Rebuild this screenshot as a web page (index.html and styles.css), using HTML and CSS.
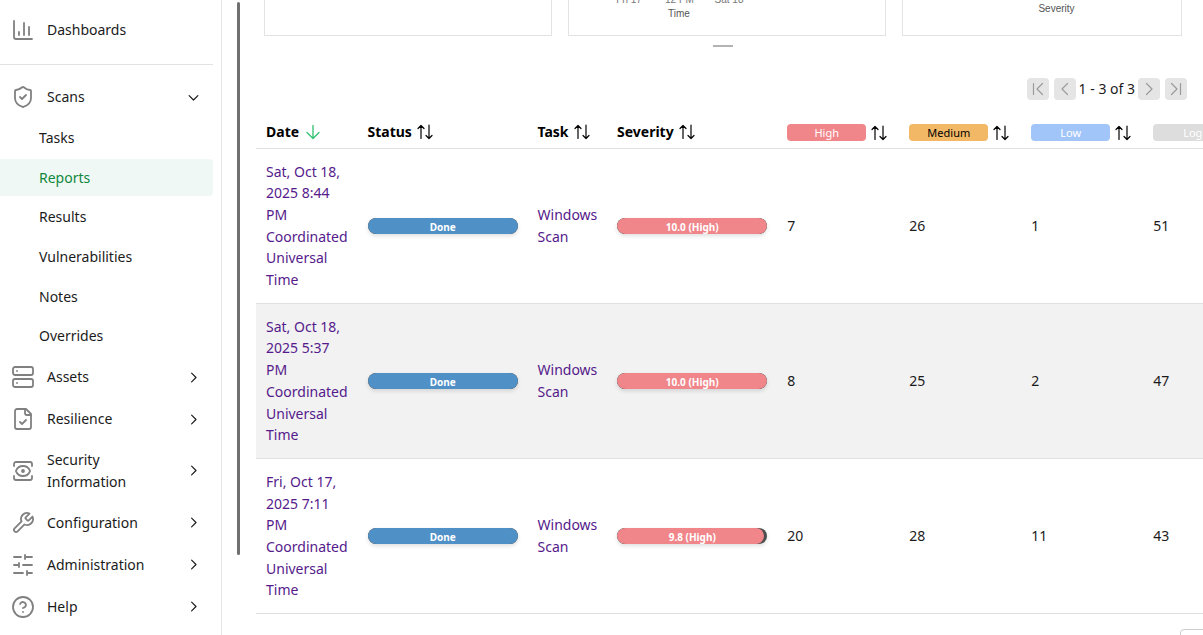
FILE: index.html
```html
<!DOCTYPE html>
<html lang="en">
<head>
<meta charset="utf-8">
<title>Reports</title>
<link rel="stylesheet" href="styles.css">
</head>
<body>
<svg class="defs" width="0" height="0">
  <symbol id="right" viewBox="0 0 24 24"><path d="m9 19 7-7-7-7"/></symbol>
  <symbol id="down" viewBox="0 0 24 24"><path d="m5 9 7 7 7-7"/></symbol>
  <symbol id="sort" viewBox="0 0 18 18"><path d="M5 15.500V2.500M2 5.500l3-3 3 3M13 2v13.500M10 12.500l3 3 3-3"/></symbol>
</svg>
<div class="app">
  <nav class="sidebar">
    <a class="item"><svg class="icon" viewBox="0 0 24 24"><path d="M3 3v16a2 2 0 0 0 2 2h16M18 17V9M13 17V5M8 17v-3"/></svg><span>Dashboards</span></a>
    <div class="divider"></div>
    <a class="item"><svg class="icon" viewBox="0 0 24 24"><path d="M20 13c0 5-3.500 7.500-7.660 8.950a1 1 0 0 1-.67-.01C7.500 20.500 4 18 4 13V6a1 1 0 0 1 1-1c2 0 4.500-1.200 6.240-2.720a1.170 1.170 0 0 1 1.520 0C14.510 3.810 17 5 19 5a1 1 0 0 1 1 1z"/><path d="m9 12 2 2 4-4"/></svg><span>Scans</span><svg class="chev"><use href="#down"/></svg></a>
    <div class="sub">
      <a>Tasks</a><a class="active">Reports</a><a>Results</a><a>Vulnerabilities</a><a>Notes</a><a>Overrides</a>
    </div>
    <a class="item"><svg class="icon" viewBox="0 0 24 24"><rect width="20" height="8" x="2" y="2" rx="2"/><rect width="20" height="8" x="2" y="14" rx="2"/><path d="M6 6h.01M6 18h.01"/></svg><span>Assets</span><svg class="chev"><use href="#right"/></svg></a>
    <a class="item"><svg class="icon" viewBox="0 0 24 24"><path d="M15 2H6a2 2 0 0 0-2 2v16a2 2 0 0 0 2 2h12a2 2 0 0 0 2-2V7Z"/><path d="M14 2v4a2 2 0 0 0 2 2h4M9 15l2 2 4-4"/></svg><span>Resilience</span><svg class="chev"><use href="#right"/></svg></a>
    <a class="item"><svg class="icon" viewBox="0 0 24 24"><path d="M3 7V5a2 2 0 0 1 2-2h14a2 2 0 0 1 2 2v2M3 17v2a2 2 0 0 0 2 2h14a2 2 0 0 0 2-2v-2"/><circle cx="12" cy="12" r="1"/><path d="M18.944 12.330a1 1 0 0 0 0-.660 7.500 7.500 0 0 0-13.888 0 1 1 0 0 0 0 .660 7.500 7.500 0 0 0 13.888 0"/></svg><span>Security<br>Information</span><svg class="chev"><use href="#right"/></svg></a>
    <a class="item"><svg class="icon" viewBox="0 0 24 24"><path d="M14.700 6.300a1 1 0 0 0 0 1.400l1.600 1.600a1 1 0 0 0 1.400 0l3.770-3.770a6 6 0 0 1-7.940 7.940l-6.910 6.910a2.120 2.120 0 0 1-3-3l6.910-6.910a6 6 0 0 1 7.940-7.940l-3.760 3.760z"/></svg><span>Configuration</span><svg class="chev"><use href="#right"/></svg></a>
    <a class="item"><svg class="icon" viewBox="0 0 24 24"><path d="M21 4h-7M10 4H3M21 12h-9M8 12H3M21 20h-5M12 20H3M14 2v4M8 10v4M16 18v4"/></svg><span>Administration</span><svg class="chev"><use href="#right"/></svg></a>
    <a class="item"><svg class="icon" viewBox="0 0 24 24"><circle cx="12" cy="12" r="10"/><path d="M9.090 9a3 3 0 0 1 5.830 1c0 2-3 3-3 3M12 17h.01"/></svg><span>Help</span><svg class="chev"><use href="#right"/></svg></a>
  </nav>
  <div class="scroll"><div class="thumb"></div></div>
  <main class="main">
    <div class="charts">
      <div class="card c1"></div>
      <div class="card c2"><svg width="316" height="35"><text x="60" y="2.500">Fri 17</text><text x="110.500" y="2.500">12 PM</text><text x="160" y="2.500">Sat 18</text><text class="label" x="110" y="17">Time</text></svg></div>
      <div class="card c3"><svg width="278" height="35"><text class="label" x="153.500" y="12">Severity</text></svg></div>
    </div>
    <div class="grip"></div>
    <div class="pager">
      <span class="btn"><svg viewBox="0 0 22 22"><path d="M6.500 5.500v11M15.500 5.500l-5.500 5.500 5.500 5.500"/></svg></span>
      <span class="btn"><svg viewBox="0 0 22 22"><path d="M13.500 5.500l-5.500 5.500 5.500 5.500"/></svg></span>
      <span class="range">1 - 3 of 3</span>
      <span class="btn"><svg viewBox="0 0 22 22"><path d="M8.500 5.500l5.500 5.500-5.500 5.500"/></svg></span>
      <span class="btn"><svg viewBox="0 0 22 22"><path d="M6.500 5.500l5.500 5.500-5.500 5.500M15.500 5.500v11"/></svg></span>
    </div>
    <div class="table">
      <div class="row head">
        <div>Date<svg class="sorted" viewBox="0 0 16 16"><path d="M8 1.500v13M2 8.500l6 6 6-6"/></svg></div>
        <div>Status<svg class="sort"><use href="#sort"/></svg></div>
        <div>Task<svg class="sort"><use href="#sort"/></svg></div>
        <div>Severity<svg class="sort"><use href="#sort"/></svg></div>
        <div><span class="tag high">High</span><svg class="sort"><use href="#sort"/></svg></div>
        <div><span class="tag medium">Medium</span><svg class="sort"><use href="#sort"/></svg></div>
        <div><span class="tag low">Low</span><svg class="sort"><use href="#sort"/></svg></div>
        <div><span class="tag log">Log</span></div>
      </div>
      <div class="row first">
        <div><a>Sat, Oct 18,<br>2025 8:44<br>PM<br>Coordinated<br>Universal<br>Time</a></div>
        <div><div class="bar"><div class="fill done"></div><b>Done</b></div></div>
        <div><a>Windows<br>Scan</a></div>
        <div><div class="bar"><div class="fill high"></div><b>10.0 (High)</b></div></div>
        <div>7</div><div>26</div><div>1</div><div>51</div>
      </div>
      <div class="row alt">
        <div><a>Sat, Oct 18,<br>2025 5:37<br>PM<br>Coordinated<br>Universal<br>Time</a></div>
        <div><div class="bar"><div class="fill done"></div><b>Done</b></div></div>
        <div><a>Windows<br>Scan</a></div>
        <div><div class="bar"><div class="fill high"></div><b>10.0 (High)</b></div></div>
        <div>8</div><div>25</div><div>2</div><div>47</div>
      </div>
      <div class="row">
        <div><a>Fri, Oct 17,<br>2025 7:11<br>PM<br>Coordinated<br>Universal<br>Time</a></div>
        <div><div class="bar"><div class="fill done"></div><b>Done</b></div></div>
        <div><a>Windows<br>Scan</a></div>
        <div><div class="bar"><div class="fill high" style="width:98%"></div><b>9.8 (High)</b></div></div>
        <div>20</div><div>28</div><div>11</div><div>43</div>
      </div>
    </div>
    <div class="select"></div>
  </main>
</div>
</body>
</html>
```

FILE: styles.css
```css
* { box-sizing: border-box; }
body { margin: 0; height: 635px; overflow: hidden; background: #fff; color: #1b1b1b; font: 14px/21.7px "Noto Sans", sans-serif; }
.defs { position: absolute; }
svg { fill: none; stroke: currentColor; stroke-width: 2; stroke-linecap: round; stroke-linejoin: round; flex: none; }
.app { display: flex; height: 635px; }
.sidebar { flex: none; width: 222px; padding: 9px 8px 0 0; border-right: 1px solid #e5e5e5; }
.item { display: flex; align-items: center; min-height: 42px; padding: 9px 12px 9px 11px; }
.item span { flex: 1; margin-left: 12px; }
.icon { width: 24px; height: 24px; color: #808080; stroke-width: 1.8; }
.chev { width: 15px; height: 15px; stroke-width: 1.9; }
.divider { height: 1px; margin: 13px 0 11px; background: #e2e2e2; }
.sub a { display: block; height: 36.700px; margin-bottom: 3px; padding: 7.500px 0 0 39px; }
.sub { padding-top: 1.300px; height: 238.100px; }
.sub .active { padding-top: 8px; color: #11873d; background: #eff8f5; border-radius: 0 4px 4px 0; }
.scroll { flex: none; width: 34px; padding: 2px 0 0 15px; }
.thumb { width: 3px; height: 553px; border-radius: 2px; background: #707070; }
.main { flex: 1; min-width: 0; overflow: hidden; }
.charts { display: flex; gap: 16px; height: 36px; padding-left: 8px; }
.card { flex: none; border: 1px solid #e3e3e3; border-top: 0; overflow: hidden; }
.card svg { display: block; stroke: none; }
.c1 { width: 288px; }
.c2 { width: 318px; }
.c3 { width: 280px; }
text { font: 10px "Liberation Sans", sans-serif; fill: #777; text-anchor: middle; }
.label { fill: #555; }
.grip { width: 20px; height: 2px; margin: 9px 0 0 457px; background: #b3b3b3; }
.pager { display: flex; justify-content: flex-end; gap: 5px; height: 22px; margin: 31px 16px 0 0; }
.btn { width: 22px; height: 22px; border-radius: 4px; background: #e5e5e5; color: #9b9b9b; }
.btn svg { display: block; width: 22px; height: 22px; stroke-width: 1.2; }
.range { margin: 0 -2px; }
.row { display: grid; grid-template-columns: 101.500px 170px 79.500px 170px 122.100px 122px 122px 122px; width: 1009.100px; height: 155px; align-items: center; border-bottom: 1px solid #e0e0e0; }
.row > div { padding-left: 10px; }
.row > div:nth-child(n+5) { padding-left: 10.200px; }
.row.head { height: 49px; padding-top: 16px; font-weight: 700; color: #000; }
.head > div { display: flex; align-items: center; }
.sorted { width: 16px; height: 16px; margin-left: 6px; color: #2fc06f; stroke-width: 1.3; }
.sort { width: 18px; height: 18px; margin-left: 4.600px; stroke-width: 1.2; }
.row.first { padding-bottom: .6px; }
.alt { padding-bottom: .4px; background: #f2f2f2; }
.row a { color: #551a8b; }
.tag { width: 79px; height: 17px; margin-top: 1px; border-radius: 4px; font: 11px/17px "Noto Sans", sans-serif; text-align: center; color: #fff; }
.tag + .sort { margin-left: 4px; margin-top: 1px; }
.high { background: #f0868a; }
.medium { background: #f2b866; color: #000; }
.low { background: #a1c5f8; }
.log { background: #ddd; }
.bar { display: grid; width: 150px; height: 16px; border-radius: 8px; background: #4c4c4c; overflow: hidden; box-shadow: 0 2px 4px rgba(0,0,0,.13); }
.bar > * { grid-area: 1 / 1; }
.fill { height: 16px; border-radius: 8px; }
.done { background: #4f91c7; }
.bar b { font-size: 10px; line-height: 18px; text-align: center; color: #fff; padding-left: .5px; }
.select { width: 60px; height: 30px; margin: 15px 0 0 924px; border: 1px solid #ccc; border-radius: 4px; }
```
